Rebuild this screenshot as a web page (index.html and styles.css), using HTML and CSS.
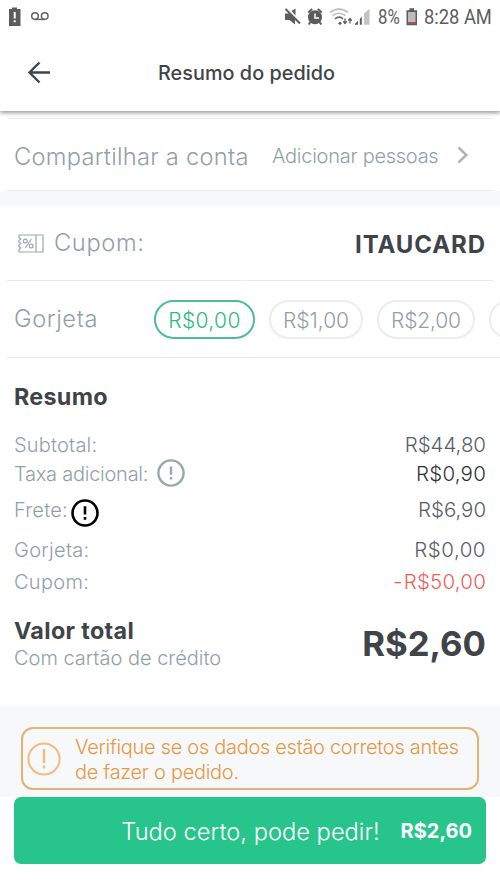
FILE: index.html
```
<!DOCTYPE html>
<html lang="pt-BR">
<head>
<meta charset="utf-8">
<title>Resumo do pedido</title>
<link rel="stylesheet" href="styles.css">
</head>
<body>
<div class="status">
  <svg class="status-left" width="60" height="34" viewBox="0 0 60 34">
    <path fill="#5c5c5c" fill-rule="evenodd" d="M12 7.500h5v1.500h3.500v17H9V9h3zM13.700 12v6.500h2V12zM13.700 20.300v2h2v-2z"/>
    <g fill="none" stroke="#636363" stroke-width="1.500"><circle cx="35" cy="16" r="3.300"/><circle cx="44.700" cy="16" r="3.300"/><path d="M35 19.400h9.700"/></g>
  </svg>
  <svg class="status-icons" width="90" height="34" viewBox="0 0 90 34">
    <g fill="#5c5c5c">
      <path d="M1 13.500h4l3 2 3 3v6L5.500 20H1zM7.500 11l4-2.500v7z"/>
      <path d="M1.500 9L16 23.500" stroke="#5c5c5c" stroke-width="2"/>
      <circle cx="31" cy="17.300" r="7"/>
      <path d="M24.200 12.500l4-3.500M37.800 12.500l-4-3.500M26.500 22l-1.800 2.500M35.500 22l1.800 2.500" stroke="#5c5c5c" stroke-width="2"/>
      <path d="M31 13.500v4.500h4" fill="none" stroke="#fff" stroke-width="1.500"/>
      <path d="M54 23.500l2-2 2 2-2 1.500zM71 24.800v-1l3-3v4zM75.800 24.800v-6l2-2v8z"/>
    </g>
    <g fill="none" stroke="#bdbdbd" stroke-width="1.600">
      <path d="M46 12.500c5.500-4.500 12.500-4.500 18 0M48.500 15.700c4-3 9-3 13 0"/>
      <path d="M51 18.800c3-2.300 5.500-2.300 8 0" stroke="#666"/>
    </g>
    <path d="M61 18.500v5M59.200 21.300l1.800 2.200 1.800-2.200M66 23.500v-5M64.200 20.700l1.800-2.200 1.800 2.200" fill="none" stroke="#555" stroke-width="1.200"/>
    <path fill="#c3c3c3" d="M80 24.800V13.500l5.500-4.700v16z"/>
  </svg>
  <span class="status-text battery-pct">8%</span>
  <svg class="battery" width="12" height="34" viewBox="0 0 12 34">
    <path fill="#5c5c5c" d="M3.500 8.300h4.500v2H11v15H.5v-15h3z"/><path fill="#bcbcbc" d="M2 12h7.500v10H2z"/><path fill="#a95058" d="M2 22h7.500v2H2z"/>
  </svg>
  <span class="status-text clock">8:28 AM</span>
</div>

<header class="header">
  <svg class="back" width="24" height="24" viewBox="0 0 24 24"><path d="M23 11.500H2.500M12.500 1.500L2.500 11.500l10 10" fill="none" stroke="#3f4649" stroke-width="2.400"/></svg>
  <h1 class="title">Resumo do pedido</h1>
</header>

<main>
  <section class="row share">
    <span class="label share-label">Compartilhar a conta</span>
    <span class="add">Adicionar pessoas</span>
    <svg class="chevron" width="12" height="18" viewBox="0 0 12 18"><path d="M1.500 1.500L9.300 9l-7.800 7.500" fill="none" stroke="#b3b3b3" stroke-width="2.500"/></svg>
  </section>
  <div class="band"></div>
  <section class="row coupon">
    <svg class="ticket" width="26" height="19" viewBox="0 0 26 19">
      <g fill="none" stroke="#9aa6ae" stroke-width="1.200"><path d="M1 1h24v17H1v-2.500l1.800-1.500L1 12.500v-1.500l1.800-1.500L1 8V6.500l1.800-1.500L1 3.500zM18 1v17M13.300 5L7.300 14"/><circle cx="7.300" cy="7" r="1.900"/><circle cx="13.200" cy="12" r="1.900"/></g>
    </svg>
    <span class="label coupon-label">Cupom:</span>
    <strong class="code">ITAUCARD</strong>
  </section>
  <section class="row tip">
    <span class="label tip-label">Gorjeta</span>
    <div class="chips">
      <span class="chip chip-0">R$0,00</span>
      <span class="chip chip-1">R$1,00</span>
      <span class="chip chip-2">R$2,00</span>
      <span class="chip chip-3"></span>
    </div>
  </section>

  <section class="summary">
    <h2 class="heading">Resumo</h2>
    <dl class="lines">
      <div class="line"><dt class="subtotal">Subtotal:</dt><dd>R$44,80</dd></div>
      <div class="line fee"><dt class="fee-label">Taxa adicional:</dt>
        <svg class="fee-info" width="28" height="28" viewBox="0 0 28 28"><g fill="none" stroke="#9aa6b0" stroke-width="2.400"><circle cx="14" cy="14" r="12.600"/><path d="M14 7.500v8.300M14 18v2.500"/></g></svg>
        <dd class="dark">R$0,90</dd></div>
      <div class="line freight"><dt class="freight-label">Frete:</dt>
        <svg class="freight-info" width="28" height="28" viewBox="0 0 28 28"><g fill="none" stroke="#000" stroke-width="2.600"><circle cx="14" cy="14" r="12.500"/><path d="M14 7.300v8.200M14 18v2.700"/></g></svg>
        <dd>R$6,90</dd></div>
      <div class="line tip-line"><dt class="tip-cost">Gorjeta:</dt><dd class="zero">R$0,00</dd></div>
      <div class="line coupon-line"><dt class="tip-cost">Cupom:</dt><dd class="discount"><span class="minus">-</span>R$50,00</dd></div>
    </dl>
    <div class="total">
      <div>
        <h2 class="total-label">Valor total</h2>
        <p class="method">Com cartão de crédito</p>
      </div>
      <strong class="total-value">R$2,60</strong>
    </div>
  </section>

  <section class="notice-area">
    <div class="notice">
      <svg width="34" height="34" viewBox="0 0 34 34"><g fill="none" stroke="#f4ba7e" stroke-width="2"><circle cx="17" cy="17" r="15.600"/><path d="M17 7v14M17 23.500v3" stroke-width="2.400"/></g></svg>
      <p class="notice-text">Verifique se os dados estão corretos antes<br>de fazer o pedido.</p>
    </div>
  </section>
  <button class="confirm"><span class="confirm-text">Tudo certo, pode pedir!</span><strong class="confirm-value">R$2,60</strong></button>
</main>
</body>
</html>
```
FILE: styles.css
```
* { box-sizing: border-box; margin: 0; padding: 0; }
body { width: 500px; height: 889px; overflow: hidden; background: #fff; color: #3f4448; font-family: Inter, "Liberation Sans", sans-serif; white-space: nowrap; }
svg { display: block; flex: none; }

.status { position: relative; z-index: 1; display: flex; height: 34px; line-height: 36px; background: #fff; }
.status-icons { margin-left: 224px; }
.status-text { font-family: Roboto, sans-serif; font-size: 19.500px; color: #5c5c5c; transform: scaleX(.86); transform-origin: left; }
.battery-pct { width: 27px; margin-left: 4px; }
.battery { margin-left: 1px; }
.clock { margin-left: 6px; width: 72px; transform: scaleX(.94); }

.header { display: flex; align-items: center; height: 77px; padding-left: 27px; background: #fff; box-shadow: 0 2px 4px rgba(0, 0, 0, .4); }
.title { margin-left: 107px; font-size: 19.800px; font-weight: 500; letter-spacing: .05px; }

.row { display: flex; align-items: center; margin: 0 7px; padding: 0 8px; }
.label { flex: none; font-size: 23.700px; font-weight: 300; color: #929fa8; }
.share { height: 73px; margin-top: 7px; border-top: 1px solid #eceeee; border-bottom: 1px solid #eceeee; }
.share-label { width: 257px; padding-top: 3px; margin-left: -1px; letter-spacing: .25px; }
.add { margin-left: 1px; padding-top: 3px; width: 167px; font-size: 20px; font-weight: 300; letter-spacing: -.27px; color: #929fa8; }
.chevron { margin-left: 18px; }
.band { height: 15px; background: #f6f8fa; }
.coupon { height: 75px; border-bottom: 1px solid #e9ebeb; }
.ticket { margin-left: 3px; }
.coupon-label { margin-left: 10px; padding-bottom: 2px; letter-spacing: .6px; }
.code { margin-left: auto; margin-right: -1px; padding-top: 2px; font-size: 24px; letter-spacing: .9px; }
.tip { height: 77px; margin-right: 0; padding-right: 0; overflow: hidden; border-bottom: 1px solid #e9ebeb; }
.tip-label { width: 139px; padding-bottom: 2px; margin-left: -1px; letter-spacing: .6px; }
.chips { display: flex; flex: 1; min-width: 0; overflow: hidden; gap: 14px; padding-top: 1px; margin-left: 1px; }
.chip { flex: none; height: 39px; border: 2px solid #ebeded; border-radius: 20px; text-align: center; font-size: 21px; font-weight: 300; line-height: 38px; color: #929fa8; }
.chip-0 { width: 101px; border-color: #4cbd94; color: #2fb987; letter-spacing: .35px; }
.chip-1 { width: 94px; }
.chip-2 { width: 98px; letter-spacing: -.150px; }
.chip-3 { width: 98px; }

.summary { height: 348px; padding: 0 14px 0 15px; }
.heading { margin-left: -1px; padding-top: 24px; font-size: 23.300px; line-height: 30px; letter-spacing: .3px; }
.line { display: flex; align-items: center; height: 29px; font-size: 20.500px; font-weight: 300; }
.lines { padding-top: 17px; }
.line dt { flex: none; margin-left: -1px; padding-top: 2px; font-size: 20px; color: #929fa8; }
.line .subtotal { letter-spacing: .2px; }
.line .fee-label { width: 134px; letter-spacing: -.25px; }
.line .freight-label { width: 54px; letter-spacing: .2px; }
.line .tip-cost { letter-spacing: .3px; }
.line dd { margin-left: auto; padding-top: 1px; color: #566067; letter-spacing: -.05px; }
.line .dark { color: #303336; letter-spacing: .2px; }
.line .zero { letter-spacing: .5px; }
.line .discount { color: #ee625b; letter-spacing: .2px; }
.minus { margin-right: 1px; }
.fee-info { margin-left: 9px; }
.freight { margin-top: 7px; }
.freight-info { margin: 8px 0 0 3px; }
.tip-line { margin-top: 11px; }
.coupon-line { margin-top: 3px; }
.total { display: flex; justify-content: space-between; padding-top: 22px; }
.total-label { margin-left: -1px; font-size: 23.300px; line-height: 28px; letter-spacing: .35px; }
.method { margin-left: -1px; font-size: 20px; font-weight: 300; line-height: 26px; color: #929fa8; }
.total-value { margin-top: -1px; font-size: 34.700px; font-weight: 700; line-height: 54px; }

.notice-area { height: 91px; padding: 21px 21px 0; background: #f6f8fa; }
.notice { display: flex; align-items: center; height: 63px; padding-left: 4px; border: 2px solid #e8b173; border-radius: 12px; }
.notice-text { margin-left: 14px; padding-top: 2px; font-size: 20px; font-weight: 300; line-height: 25px; letter-spacing: -.3px; color: #e59a45; }
.confirm { display: flex; align-items: center; justify-content: flex-end; width: 472px; height: 67px; margin-left: 14px; padding-right: 14px; border: 0; border-radius: 7px; background: #27c58b; color: #fff; font-family: inherit; }
.confirm-text { padding-top: 2px; font-size: 23.700px; font-weight: 300; }
.confirm-value { margin-left: 21px; padding-top: 1px; font-size: 20px; font-weight: 700; }
```
